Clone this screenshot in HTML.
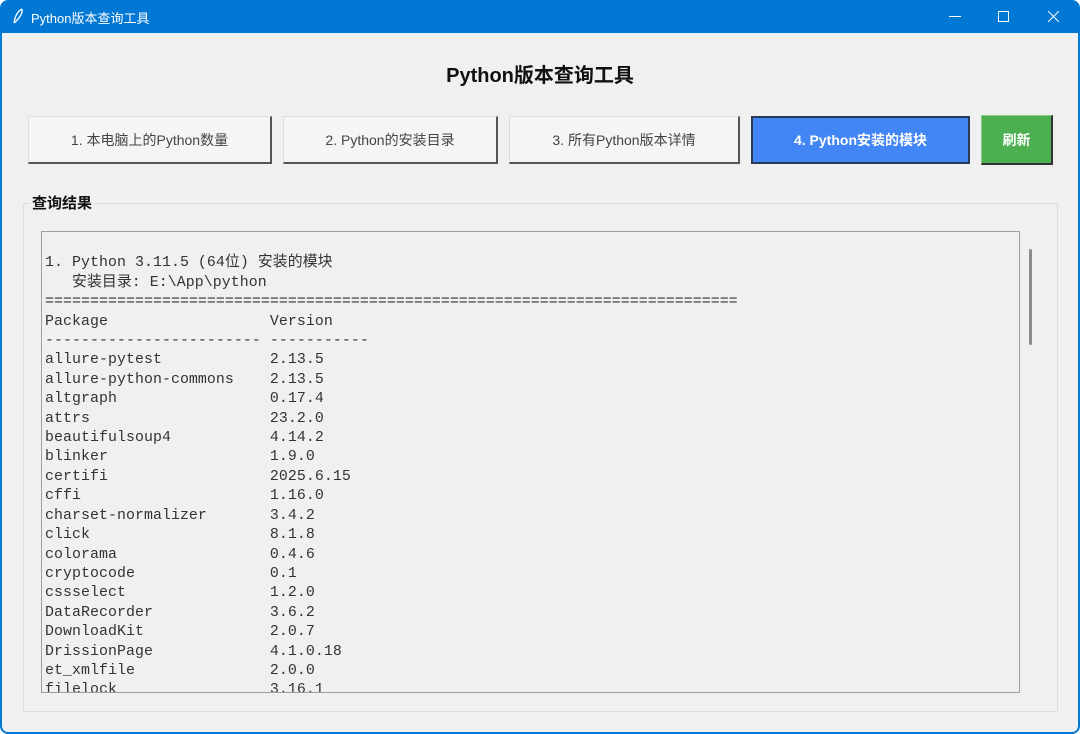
<!DOCTYPE html>
<html><head><meta charset="utf-8"><style>
*{margin:0;padding:0;box-sizing:border-box}
html,body{width:1080px;height:734px;overflow:hidden;background:#fff}
.win{position:absolute;left:0;top:0;width:1080px;height:734px;background:#0078d4;border-radius:8px;}
.client{position:absolute;left:2px;top:33px;width:1076px;height:699px;background:#f0f0f0;border-radius:0 0 6px 6px}
.title{position:absolute;left:31px;top:8px;color:#fff;font:13px "Liberation Sans","Noto Sans CJK SC",sans-serif}
.h1{position:absolute;left:0;width:1080px;top:59px;text-align:center;font:bold 20px "Liberation Sans","Noto Sans CJK SC",sans-serif;color:#111}
.btn{position:absolute;top:116px;height:48px;background:#f5f5f5;border:1px solid #ddd;border-right:2px solid #555;border-bottom:2px solid #555;font:14px "Liberation Sans","Noto Sans CJK SC",sans-serif;color:#444;display:flex;align-items:center;justify-content:center}
.grp{position:absolute;left:23px;top:203px;width:1035px;height:509px;border:1px solid #dcdcdc}
.glbl{position:absolute;left:30px;top:192px;background:#f0f0f0;font:bold 15px "Liberation Sans","Noto Sans CJK SC",sans-serif;color:#111;padding:0 2px}
.ta{position:absolute;left:41px;top:231px;width:979px;height:462px;border:1px solid #a0a0a0;background:#f0f0f0;overflow:hidden}
pre{position:absolute;left:3px;top:3px;font:14.9px/19.4px "Liberation Mono","Noto Sans CJK SC",monospace;color:#333;letter-spacing:0.06px}
.thumb{position:absolute;left:1029px;top:249px;width:3px;height:96px;background:#8a8a8a;border-radius:2px}
</style></head><body>
<div class="win">
<svg style="position:absolute;left:12px;top:8px" width="12" height="17" viewBox="0 0 12 17"><path d="M10 1 C6 3 3 8 2 15 M10 1 C11 5 7 11 2 15" stroke="#fff" stroke-width="1.3" fill="none"/></svg>
<div class="title">Python版本查询工具</div>
<svg style="position:absolute;left:949px;top:16px" width="12" height="2"><path d="M0 0.5H12" stroke="#fff"/></svg>
<svg style="position:absolute;left:998px;top:11px" width="11" height="11"><rect x="0.5" y="0.5" width="10" height="10" fill="none" stroke="#fff"/></svg>
<svg style="position:absolute;left:1048px;top:11px" width="11" height="11"><path d="M0 0L11 11M11 0L0 11" stroke="#fff"/></svg>
<div class="client"></div>
</div>
<div class="h1">Python版本查询工具</div>
<div class="btn" style="left:28px;width:244px">1. 本电脑上的Python数量</div>
<div class="btn" style="left:283px;width:215px">2. Python的安装目录</div>
<div class="btn" style="left:509px;width:231px">3. 所有Python版本详情</div>
<div class="btn" style="left:751px;width:219px;background:#4285f4;border:2px solid #2a3a55;color:#fff;font-weight:bold">4. Python安装的模块</div>
<div class="btn" style="left:981px;width:72px;top:115px;height:50px;background:#4caf50;border:1px solid #8c8;border-right:2px solid #333;border-bottom:2px solid #333;color:#fff;font-weight:bold">刷新</div>
<div class="grp"></div>
<div class="glbl">查询结果</div>
<div class="ta"><pre>

1. Python 3.11.5 (64位) 安装的模块
   安装目录: E:\App\python
=============================================================================
Package                  Version
------------------------ -----------
allure-pytest            2.13.5
allure-python-commons    2.13.5
altgraph                 0.17.4
attrs                    23.2.0
beautifulsoup4           4.14.2
blinker                  1.9.0
certifi                  2025.6.15
cffi                     1.16.0
charset-normalizer       3.4.2
click                    8.1.8
colorama                 0.4.6
cryptocode               0.1
cssselect                1.2.0
DataRecorder             3.6.2
DownloadKit              2.0.7
DrissionPage             4.1.0.18
et_xmlfile               2.0.0
filelock                 3.16.1
</pre></div>
<div class="thumb"></div>
</body></html>
